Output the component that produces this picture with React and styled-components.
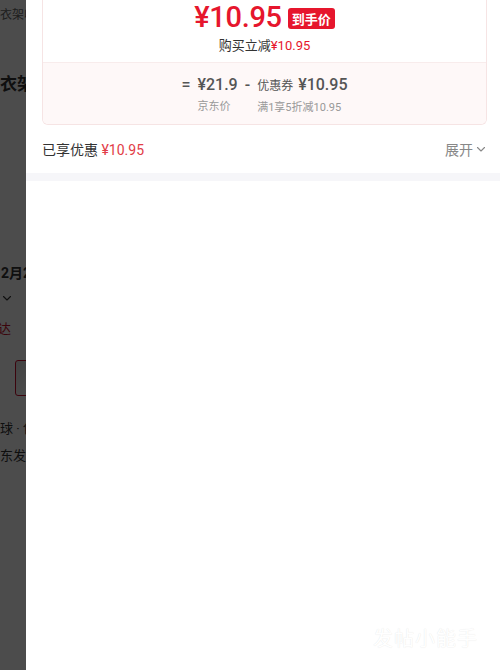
import React from 'react';
import styled, { createGlobalStyle } from 'styled-components';

const GlobalStyle = createGlobalStyle`
  html, body {
    margin: 0;
    padding: 0;
    background: #fff;
  }
  body {
    font-family: Roboto, "Noto Sans CJK SC", sans-serif;
  }
`;

const Screen = styled.div`
  width: 500px;
  height: 670px;
  position: relative;
  overflow: hidden;
  background: #fff;
`;

/* page that lies under the drawer */
const Underlay = styled.div`
  display: flex;
  flex-direction: column;
  padding-top: 6px;
  color: #333;
  font-size: 13px;
`;

const UnderText = styled.div`
  font-size: ${p => p.size || 13}px;
  font-weight: ${p => (p.bold ? 700 : 400)};
  color: ${p => p.color || '#333'};
  margin-top: ${p => p.gap || 0}px;
  margin-left: ${p => p.shift || 0}px;
  line-height: ${p => p.lh || 18}px;
  white-space: nowrap;
`;

const UnderThumb = styled.div`
  margin-top: ${p => p.gap}px;
  margin-left: 15px;
  width: 40px;
  height: 34px;
  border: 1px solid #c8102e;
  border-radius: 3px;
  background: linear-gradient(135deg, #ddd 0%, #fff 60%);
`;

const Mask = styled.div`
  position: absolute;
  inset: 0;
  background: rgba(0, 0, 0, 0.7);
`;

const Drawer = styled.div`
  position: absolute;
  top: 0;
  left: 26px;
  right: 0;
  bottom: 0;
  background: #fff;
  display: flex;
  flex-direction: column;
`;

const Body = styled.div`
  padding: 0 13px 0 16px;
`;

const Card = styled.div`
  border: 1px solid #f6e4e4;
  border-top: none;
  border-radius: 0 0 6px 6px;
  overflow: hidden;
`;

const TopSection = styled.div`
  display: flex;
  flex-direction: column;
  align-items: center;
  padding: 2px 0 7px;
  background: #fff;
  border-bottom: 1px solid #f8ecec;
`;

const PriceRow = styled.div`
  display: flex;
  align-items: center;
  gap: 6px;
  height: 30px;
`;

const BigPrice = styled.span`
  font-family: Roboto, sans-serif;
  font-weight: 500;
  font-size: 29px;
  line-height: 30px;
  color: #e6162d;
  letter-spacing: -0.3px;
`;

const Badge = styled.span`
  background: #e6162d;
  color: #fff;
  font-size: 13px;
  font-weight: 700;
  line-height: 21px;
  padding: 0 4px;
  border-radius: 3px;
  margin-top: 2px;
  font-family: "Noto Sans CJK SC", sans-serif;
`;

const SubLine = styled.div`
  margin-top: 5px;
  font-size: 13px;
  line-height: 18px;
  color: #333;
`;

const Red = styled.span`
  color: ${p => p.soft ? '#e23c47' : '#e6162d'};
`;

const BottomSection = styled.div`
  background: #fef8f8;
  display: flex;
  justify-content: center;
  padding: 11px 0 8px;
  gap: 7px;
`;

const Col = styled.div`
  display: flex;
  flex-direction: column;
  align-items: flex-start;
`;

const Value = styled.div`
  display: flex;
  align-items: baseline;
  gap: 5px;
  color: #555;
  font-size: 16px;
  line-height: 22px;
  font-weight: 500;
  white-space: nowrap;
`;

const SmallLabel = styled.span`
  font-size: 12px;
  font-weight: 400;
  color: #555;
`;

const Caption = styled.div`
  font-size: 11px;
  line-height: 16px;
  color: #999;
  margin-top: 3px;
  white-space: nowrap;
`;

const SavedRow = styled.div`
  display: flex;
  align-items: center;
  justify-content: space-between;
  height: 48px;
  font-size: 14px;
  color: #333;
`;

const Expand = styled.div`
  display: flex;
  align-items: center;
  gap: 3px;
  color: #888;
  font-size: 14px;
  padding-right: 1px;
`;

const Divider = styled.div`
  height: 8px;
  background: #f6f6f9;
`;

const Watermark = styled.div`
  position: absolute;
  right: 22px;
  bottom: 18px;
  font-size: 20px;
  color: #fff;
  text-shadow: 0 0 1px rgba(0, 0, 0, 0.12);
  letter-spacing: 1px;
  font-family: "Noto Sans CJK SC", sans-serif;
`;

const Chevron = ({ color = '#888', size = 10 }) => (
  <svg width={size} height={size} viewBox="0 0 10 10" fill="none">
    <path d="M1.5 3.5 L5 7 L8.5 3.5" stroke={color} strokeWidth="1.1" strokeLinecap="round" strokeLinejoin="round" />
  </svg>
);

export default function App() {
  return (
    <Screen>
      <GlobalStyle />
      <Underlay>
        <UnderText size={12} color="#666">衣架收纳</UnderText>
        <UnderText size={17} bold gap={48} lh={24}>衣架挂钩</UnderText>
        <UnderText size={14} bold gap={168} shift={-7}>12月2日</UnderText>
        <UnderText gap={8} shift={-4}>i <Chevron color="#333" /></UnderText>
        <UnderText gap={12} shift={-15} color="#c8102e">送达</UnderText>
        <UnderThumb gap={22} />
        <UnderText gap={24} shift={-13}>地球 · 包邮</UnderText>
        <UnderText gap={9}>东发货</UnderText>
      </Underlay>
      <Mask />
      <Drawer>
        <Body>
          <Card>
            <TopSection>
              <PriceRow>
                <BigPrice>¥10.95</BigPrice>
                <Badge>到手价</Badge>
              </PriceRow>
              <SubLine>
                购买立减<Red>¥10.95</Red>
              </SubLine>
            </TopSection>
            <BottomSection>
              <Col>
                <Value>=</Value>
              </Col>
              <Col>
                <Value>¥21.9</Value>
                <Caption>京东价</Caption>
              </Col>
              <Col>
                <Value>-</Value>
              </Col>
              <Col>
                <Value>
                  <SmallLabel>优惠券</SmallLabel>¥10.95
                </Value>
                <Caption>满1享5折减10.95</Caption>
              </Col>
            </BottomSection>
          </Card>
          <SavedRow>
            <span>
              已享优惠 <Red soft>¥10.95</Red>
            </span>
            <Expand>
              展开 <Chevron />
            </Expand>
          </SavedRow>
        </Body>
        <Divider />
      </Drawer>
      <Watermark>发帖小能手</Watermark>
    </Screen>
  );
}
